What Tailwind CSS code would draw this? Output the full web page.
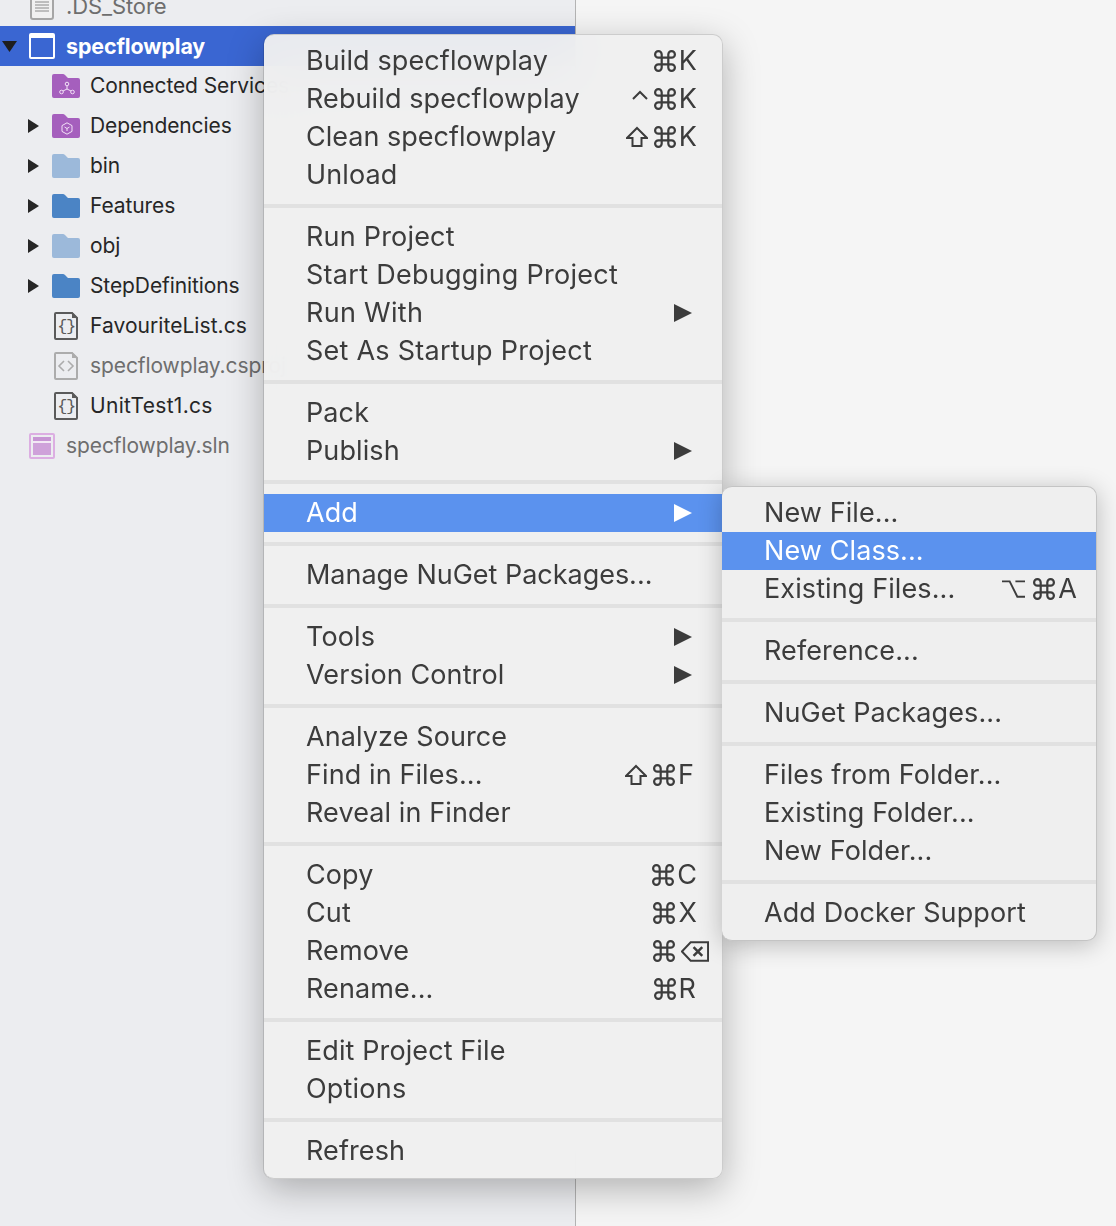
<!DOCTYPE html>
<html><head><meta charset="utf-8"><script src="https://cdn.jsdelivr.net/npm/@tailwindcss/browser@4"></script></head>
<body class="m-0 overflow-hidden">
<svg class="hidden"><defs>
<symbol id="cmd" viewBox="2 2 20 20"><path d="M15 6v12a3 3 0 1 0 3-3H6a3 3 0 1 0 3 3V6a3 3 0 1 0-3 3h12a3 3 0 1 0-3-3" fill="none" stroke="currentColor" stroke-width="2"/></symbol>
<symbol id="shift" viewBox="0 0 22 22"><path d="M11 2 L21 12 H15.5 V20 H6.5 V12 H1 Z" fill="none" stroke="currentColor" stroke-width="2"/></symbol>
<symbol id="arr" viewBox="0 0 18 18"><path d="M0 0 L18 9 L0 18 Z" fill="currentColor"/></symbol>
<symbol id="folder" viewBox="0 0 28 24"><path d="M2 0 H11 Q12 0 13 1 L16 4 H26 a2 2 0 0 1 2 2 V22 a2 2 0 0 1-2 2 H2 a2 2 0 0 1-2-2 V2 a2 2 0 0 1 2-2z" fill="currentColor"/></symbol>
<symbol id="file" viewBox="0 0 24 28"><path d="M2 1 H18 L23 6 V26 a1 1 0 0 1-1 1 H2 a1 1 0 0 1-1-1 V2 a1 1 0 0 1 1-1z" fill="none" stroke="currentColor" stroke-width="2"/><path d="M18 0 L24 6 H18z" fill="currentColor"/></symbol>
<symbol id="tri" viewBox="0 0 11 14"><path d="M0 0L11 7L0 14Z" fill="#262626"/></symbol>
</defs></svg>
<div class="relative w-[1116px] h-[1226px] overflow-hidden bg-[#f5f5f5] font-['Inter','Liberation_Sans',sans-serif]">
  <!-- sidebar -->
  <div class="absolute left-0 top-0 bottom-0 w-[576px] bg-[#ecedf0] border-r border-[#b4b4b4] text-[21px] text-[#262626] tracking-[-0.1px]">
    <div class="-mt-[14px]">
      <div class="flex items-center h-10 pl-[30px] gap-[12px] text-[#6e6e6e]">
        <svg width="24" height="28" viewBox="0 0 24 28" class="text-[#a6a6a6] shrink-0"><rect x="1" y="1" width="22" height="26" rx="2" fill="#f1f1f1" stroke="currentColor" stroke-width="2"/><path d="M5 7h14M5 10h14M5 13h14M5 16h14M5 19h14" stroke="#8a8a8a" stroke-width="1"/></svg>
        <span class="text-[22px]">.DS_Store</span>
      </div>
      <div class="flex items-center h-10 bg-[#3a66d2] text-white font-bold">
        <svg width="15" height="11" viewBox="0 0 15 11" class="ml-[2px] text-[#1e1e1e] shrink-0"><path d="M0 0H15L7.5 11Z" fill="currentColor"/></svg>
        <span class="ml-[12px] w-[26px] h-[26px] rounded-[2px] border-2 border-t-[5px] border-white shrink-0"></span>
        <span class="ml-[11px] text-[21.4px]">specflowplay</span>
      </div>
      <div class="flex items-center h-10 pl-[52px]">
        <span class="relative w-[28px] h-[24px] text-[#a55fbd] shrink-0"><svg width="28" height="24"><use href="#folder"/></svg>
          <svg width="16" height="14" viewBox="0 0 16 14" class="absolute left-[7px] top-[7px]" fill="none" stroke="#f3e2f7" stroke-width="1"><circle cx="8" cy="3" r="1.8"/><circle cx="2.5" cy="11" r="1.8"/><circle cx="13.5" cy="11" r="1.8"/><path d="M8 5v3M4 10l4-2 4 2"/></svg></span>
        <span class="ml-[10px] whitespace-nowrap">Connected Services</span>
      </div>
      <div class="flex items-center h-10 pl-[28px]">
        <svg width="11" height="14" class="shrink-0"><use href="#tri"/></svg>
        <span class="relative ml-[13px] w-[28px] h-[24px] text-[#a55fbd] shrink-0"><svg width="28" height="24"><use href="#folder"/></svg>
          <svg width="12" height="13" viewBox="0 0 12 13" class="absolute left-[9px] top-[8px]" fill="none" stroke="#f3e2f7" stroke-width="1"><path d="M6 .8 11 3.6v5.8L6 12.2 1 9.4V3.6Z"/><path d="M3.5 5 6 6.5 8.5 5M6 6.5V9"/></svg></span>
        <span class="ml-[10px]">Dependencies</span>
      </div>
      <div class="flex items-center h-10 pl-[28px]">
        <svg width="11" height="14" class="shrink-0"><use href="#tri"/></svg>
        <svg width="28" height="24" class="ml-[13px] text-[#9cb9da] shrink-0"><use href="#folder"/></svg>
        <span class="ml-[10px]">bin</span>
      </div>
      <div class="flex items-center h-10 pl-[28px]">
        <svg width="11" height="14" class="shrink-0"><use href="#tri"/></svg>
        <svg width="28" height="24" class="ml-[13px] text-[#4b84c5] shrink-0"><use href="#folder"/></svg>
        <span class="ml-[10px]">Features</span>
      </div>
      <div class="flex items-center h-10 pl-[28px]">
        <svg width="11" height="14" class="shrink-0"><use href="#tri"/></svg>
        <svg width="28" height="24" class="ml-[13px] text-[#9cb9da] shrink-0"><use href="#folder"/></svg>
        <span class="ml-[10px]">obj</span>
      </div>
      <div class="flex items-center h-10 pl-[28px]">
        <svg width="11" height="14" class="shrink-0"><use href="#tri"/></svg>
        <svg width="28" height="24" class="ml-[13px] text-[#4b84c5] shrink-0"><use href="#folder"/></svg>
        <span class="ml-[10px]">StepDefinitions</span>
      </div>
      <div class="flex items-center h-10 pl-[54px]">
        <span class="relative w-[24px] h-[28px] text-[#5a5a5a] shrink-0"><svg width="24" height="28"><use href="#file"/></svg><span class="absolute inset-0 flex items-center justify-center text-[17px] leading-none font-['Liberation_Mono'] tracking-[-1.5px]">{}</span></span>
        <span class="ml-[12px] tracking-[0.05px]">FavouriteList.cs</span>
      </div>
      <div class="flex items-center h-10 pl-[54px] text-[#6e6e6e]">
        <span class="relative w-[24px] h-[28px] text-[#acacac] shrink-0"><svg width="24" height="28"><use href="#file"/><path d="M10 9 L5 14 L10 19 M14 9 L19 14 L14 19" fill="none" stroke="currentColor" stroke-width="1.6"/></svg></span>
        <span class="ml-[12px] whitespace-nowrap">specflowplay.csproj</span>
      </div>
      <div class="flex items-center h-10 pl-[54px]">
        <span class="relative w-[24px] h-[28px] text-[#5a5a5a] shrink-0"><svg width="24" height="28"><use href="#file"/></svg><span class="absolute inset-0 flex items-center justify-center text-[17px] leading-none font-['Liberation_Mono'] tracking-[-1.5px]">{}</span></span>
        <span class="ml-[12px] tracking-[0.3px]">UnitTest1.cs</span>
      </div>
      <div class="flex items-center h-10 pl-[29px] text-[#6e6e6e]">
        <span class="flex items-center justify-center w-[26px] h-[26px] rounded-[2px] border-2 border-[#dcaee2] shrink-0"><span class="w-[18px] h-[18px] bg-[#cfa2da] border-t-[4px] border-[#c795d4] flex flex-col"><span class="h-[2px] bg-[#f3e8f5]"></span></span></span>
        <span class="ml-[11px]">specflowplay.sln</span>
      </div>
    </div>
  </div>

  <!-- main menu -->
  <div class="absolute left-[264px] top-[34px] w-[459px] pt-[7px] pb-[8px] rounded-[10px] bg-[#efefef]/96 backdrop-blur-xl border-y border-r border-[#bdbdbd]/70 shadow-[0_10px_36px_rgba(0,0,0,0.28),-1px_0_0_rgba(0,0,0,0.12)] text-[27px] tracking-[0.1px] leading-[38px] text-[#3c3c3c]">
    <div class="h-[38px] pl-[42px] pr-[25px] flex items-center justify-between"><span>Build specflowplay</span><span class="flex items-center gap-[3px]"><svg width="22" height="22"><use href="#cmd"/></svg><span>K</span></span></div>
    <div class="h-[38px] pl-[42px] pr-[25px] flex items-center justify-between"><span>Rebuild specflowplay</span><span class="flex items-center gap-[3px]"><svg width="16" height="10" viewBox="0 0 16 10" class="mr-[3px] -mt-[8px]"><path d="M1 9 L8 2 L15 9" fill="none" stroke="currentColor" stroke-width="2"/></svg><svg width="22" height="22"><use href="#cmd"/></svg><span>K</span></span></div>
    <div class="h-[38px] pl-[42px] pr-[25px] flex items-center justify-between"><span class="tracking-[0px]">Clean specflowplay</span><span class="flex items-center gap-[3px]"><svg width="22" height="22" class="mr-[3px]"><use href="#shift"/></svg><svg width="22" height="22"><use href="#cmd"/></svg><span>K</span></span></div>
    <div class="h-[38px] pl-[42px] flex items-center"><span>Unload</span></div>
    <div class="h-[4px] my-[10px] bg-[#e1e1e1]"></div>
    <div class="h-[38px] pl-[42px] flex items-center"><span class="tracking-[0.2px]">Run Project</span></div>
    <div class="h-[38px] pl-[42px] flex items-center"><span class="tracking-[0.28px]">Start Debugging Project</span></div>
    <div class="h-[38px] pl-[42px] pr-[30px] flex items-center justify-between"><span class="tracking-[0.3px]">Run With</span><svg width="18" height="18"><use href="#arr"/></svg></div>
    <div class="h-[38px] pl-[42px] flex items-center"><span class="tracking-[0.25px]">Set As Startup Project</span></div>
    <div class="h-[4px] my-[10px] bg-[#e1e1e1]"></div>
    <div class="h-[38px] pl-[42px] flex items-center"><span>Pack</span></div>
    <div class="h-[38px] pl-[42px] pr-[30px] flex items-center justify-between"><span>Publish</span><svg width="18" height="18"><use href="#arr"/></svg></div>
    <div class="h-[4px] my-[10px] bg-[#e1e1e1]"></div>
    <div class="h-[38px] pl-[42px] pr-[30px] flex items-center justify-between bg-[#5b92ee] text-white"><span>Add</span><svg width="18" height="18"><use href="#arr"/></svg></div>
    <div class="h-[4px] my-[10px] bg-[#e1e1e1]"></div>
    <div class="h-[38px] pl-[42px] flex items-center"><span class="tracking-[-0.02px]">Manage NuGet Packages...</span></div>
    <div class="h-[4px] my-[10px] bg-[#e1e1e1]"></div>
    <div class="h-[38px] pl-[42px] pr-[30px] flex items-center justify-between"><span>Tools</span><svg width="18" height="18"><use href="#arr"/></svg></div>
    <div class="h-[38px] pl-[42px] pr-[30px] flex items-center justify-between"><span>Version Control</span><svg width="18" height="18"><use href="#arr"/></svg></div>
    <div class="h-[4px] my-[10px] bg-[#e1e1e1]"></div>
    <div class="h-[38px] pl-[42px] flex items-center"><span>Analyze Source</span></div>
    <div class="h-[38px] pl-[42px] pr-[28px] flex items-center justify-between"><span>Find in Files...</span><span class="flex items-center gap-[3px]"><svg width="22" height="22" class="mr-[3px]"><use href="#shift"/></svg><svg width="22" height="22"><use href="#cmd"/></svg><span>F</span></span></div>
    <div class="h-[38px] pl-[42px] flex items-center"><span>Reveal in Finder</span></div>
    <div class="h-[4px] my-[10px] bg-[#e1e1e1]"></div>
    <div class="h-[38px] pl-[42px] pr-[25px] flex items-center justify-between"><span>Copy</span><span class="flex items-center gap-[3px]"><svg width="22" height="22"><use href="#cmd"/></svg><span>C</span></span></div>
    <div class="h-[38px] pl-[42px] pr-[25px] flex items-center justify-between"><span>Cut</span><span class="flex items-center gap-[3px]"><svg width="22" height="22"><use href="#cmd"/></svg><span>X</span></span></div>
    <div class="h-[38px] pl-[42px] pr-[13px] flex items-center justify-between"><span>Remove</span><span class="flex items-center gap-[6px]"><svg width="22" height="22"><use href="#cmd"/></svg><svg width="28" height="21" viewBox="0 0 29 21" fill="none" stroke="currentColor" stroke-width="2"><path d="M28 1 V20 H10 L1 10.5 L10 1 Z"/><path d="M13 6 L22 15 M22 6 L13 15" stroke-width="2.6"/></svg></span></div>
    <div class="h-[38px] pl-[42px] pr-[26px] flex items-center justify-between"><span>Rename...</span><span class="flex items-center gap-[3px]"><svg width="22" height="22"><use href="#cmd"/></svg><span>R</span></span></div>
    <div class="h-[4px] my-[10px] bg-[#e1e1e1]"></div>
    <div class="h-[38px] pl-[42px] flex items-center"><span>Edit Project File</span></div>
    <div class="h-[38px] pl-[42px] flex items-center"><span class="tracking-[0.2px]">Options</span></div>
    <div class="h-[4px] my-[10px] bg-[#e1e1e1]"></div>
    <div class="h-[38px] pl-[42px] flex items-center"><span>Refresh</span></div>
  </div>

  <!-- submenu -->
  <div class="absolute left-[722px] top-[486px] w-[375px] pt-[7px] pb-[8px] rounded-[10px] bg-[#efefef] border-t border-b border-r border-[#c4c4c4] shadow-[0_4px_24px_rgba(0,0,0,0.24)] text-[27px] tracking-[0.1px] leading-[38px] text-[#3c3c3c]">
    <div class="h-[38px] pl-[42px] flex items-center"><span>New File...</span></div>
    <div class="h-[38px] pl-[42px] flex items-center bg-[#5b92ee] text-white"><span>New Class...</span></div>
    <div class="h-[38px] pl-[42px] pr-[19px] flex items-center justify-between"><span>Existing Files...</span><span class="flex items-center gap-[3px]"><svg width="23" height="18" viewBox="0 0 24 18" fill="none" stroke="currentColor" stroke-width="2" class="mr-[5px]"><path d="M0 1 H8 L16 17 H24 M14 1 H24"/></svg><svg width="22" height="22"><use href="#cmd"/></svg><span>A</span></span></div>
    <div class="h-[4px] my-[10px] bg-[#e1e1e1]"></div>
    <div class="h-[38px] pl-[42px] flex items-center"><span>Reference...</span></div>
    <div class="h-[4px] my-[10px] bg-[#e1e1e1]"></div>
    <div class="h-[38px] pl-[42px] flex items-center"><span>NuGet Packages...</span></div>
    <div class="h-[4px] my-[10px] bg-[#e1e1e1]"></div>
    <div class="h-[38px] pl-[42px] flex items-center"><span>Files from Folder...</span></div>
    <div class="h-[38px] pl-[42px] flex items-center"><span>Existing Folder...</span></div>
    <div class="h-[38px] pl-[42px] flex items-center"><span>New Folder...</span></div>
    <div class="h-[4px] my-[10px] bg-[#e1e1e1]"></div>
    <div class="h-[38px] pl-[42px] flex items-center"><span>Add Docker Support</span></div>
  </div>
</div>
</body></html>
